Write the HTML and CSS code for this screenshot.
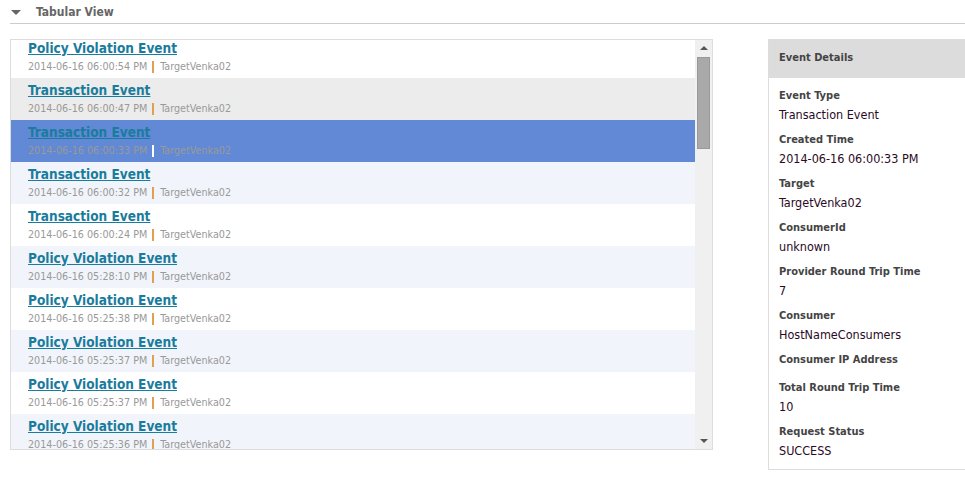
FILE: index.html
```html
<!DOCTYPE html>
<html lang="en">
<head>
  <meta charset="UTF-8">
  <title>Tabular View</title>
  <link rel="stylesheet" href="styles.css">
</head>
<body>
  <div class="section-head">
    <span class="caret"></span>
    <span class="section-title">Tabular View</span>
  </div>

  <div class="main">
    <div class="list-box">
      <div class="list-view">
        <div class="list-rows" id="event-rows"></div>
      </div>
      <div class="scrollbar">
        <span class="arrow up"></span>
        <div class="thumb"></div>
        <span class="arrow down"></span>
      </div>
    </div>

    <div class="details">
      <div class="details-head">Event Details</div>
      <div class="details-body" id="details-body"></div>
    </div>
  </div>

  <script>
    const events = [
      ['Policy Violation Event', '2014-06-16 06:00:54 PM', ''],
      ['Transaction Event', '2014-06-16 06:00:47 PM', 'hover'],
      ['Transaction Event', '2014-06-16 06:00:33 PM', 'selected'],
      ['Transaction Event', '2014-06-16 06:00:32 PM', 'alt'],
      ['Transaction Event', '2014-06-16 06:00:24 PM', ''],
      ['Policy Violation Event', '2014-06-16 05:28:10 PM', 'alt'],
      ['Policy Violation Event', '2014-06-16 05:25:38 PM', ''],
      ['Policy Violation Event', '2014-06-16 05:25:37 PM', 'alt'],
      ['Policy Violation Event', '2014-06-16 05:25:37 PM', ''],
      ['Policy Violation Event', '2014-06-16 05:25:36 PM', 'alt']
    ];

    const details = [
      ['Event Type', 'Transaction Event'],
      ['Created Time', '2014-06-16 06:00:33 PM'],
      ['Target', 'TargetVenka02'],
      ['ConsumerId', 'unknown'],
      ['Provider Round Trip Time', '7'],
      ['Consumer', 'HostNameConsumers'],
      ['Consumer IP Address', ''],
      ['Total Round Trip Time', '10'],
      ['Request Status', 'SUCCESS']
    ];

    const rows = document.getElementById('event-rows');
    events.forEach(ev => {
      const row = document.createElement('div');
      row.className = 'event-row ' + ev[2];
      row.innerHTML =
        '<a href="#" class="event-name">' + ev[0] + '</a>' +
        '<div class="event-meta">' + ev[1] +
        '<span class="sep"></span>TargetVenka02</div>';
      rows.appendChild(row);
    });

    const body = document.getElementById('details-body');
    details.forEach(d => {
      const label = document.createElement('div');
      label.className = 'detail-label';
      label.textContent = d[0];
      const value = document.createElement('div');
      value.className = 'detail-value';
      value.textContent = d[1];
      body.appendChild(label);
      body.appendChild(value);
    });
  </script>
</body>
</html>
```

FILE: styles.css
```css
body {
  margin: 0;
  background: #fff;
  font-family: "DejaVu Sans Condensed", "DejaVu Sans", sans-serif;
  color: #333;
}

.section-head {
  margin-left: 10px;
  height: 24px;
  border-bottom: 1px solid #ccc;
  display: flex;
  align-items: center;
  padding-top: 1px;
  box-sizing: border-box;
}

.caret {
  width: 0;
  height: 0;
  margin-left: 1px;
  border-left: 5px solid transparent;
  border-right: 5px solid transparent;
  border-top: 5px solid #666;
}

.section-title {
  margin-left: 15px;
  font-size: 12px;
  font-weight: bold;
  color: #666;
}

.main {
  display: flex;
  align-items: flex-start;
  margin-top: 15px;
  padding-left: 10px;
}

.list-box {
  flex: none;
  width: 701px;
  height: 409px;
  border: 1px solid #ddd;
  display: flex;
}

.list-view {
  flex: 1;
  overflow: hidden;
}

.list-rows {
  margin-top: -4px;
}

.event-row {
  height: 42px;
  padding-left: 17px;
  box-sizing: border-box;
  padding-top: 2px;
}

.event-row.hover {
  background: #ececec;
}

.event-row.selected {
  background: #6189d5;
}

.event-row.alt {
  background: #f1f5fb;
}

.event-name {
  display: block;
  width: max-content;
  font-size: 13.5px;
  line-height: 20px;
  font-weight: bold;
  color: #1a7c9c;
}

.event-meta {
  display: flex;
  align-items: center;
  padding-top: 1px;
  font-size: 10.7px;
  line-height: 16px;
  color: #999;
}

.sep {
  width: 2px;
  height: 12px;
  margin: 0 6px 0 5px;
  background: #e0a050;
}

.selected .sep {
  background: #fff;
}

.scrollbar {
  width: 17px;
  background: #f0f0f0;
  display: flex;
  flex-direction: column;
  align-items: center;
}

.arrow {
  width: 0;
  height: 0;
  border-left: 4px solid transparent;
  border-right: 4px solid transparent;
}

.arrow.up {
  margin-top: 6px;
  border-bottom: 4px solid #555;
}

.arrow.down {
  margin-top: auto;
  margin-bottom: 6px;
  border-top: 4px solid #555;
}

.thumb {
  width: 11px;
  height: 90px;
  margin-top: 7px;
  background: #a9a9a9;
  border: 1px solid #999;
}

.details {
  margin-left: 55px;
  flex: 1;
  min-width: 190px;
  border: 1px solid #ddd;
  border-right: none;
}

.details-head {
  height: 38px;
  line-height: 36px;
  padding-left: 10px;
  background: #dcdcdc;
  font-size: 11px;
  font-weight: bold;
  color: #444;
}

.details-body {
  padding: 8px 10px 3px;
}

.detail-label {
  font-size: 11px;
  line-height: 19px;
  font-weight: bold;
  color: #444;
}

.detail-value {
  font-size: 12.5px;
  line-height: 18px;
  padding-top: 1px;
  margin-bottom: 6px;
  color: #2a0a26;
}

.detail-value:empty {
  padding-top: 3px;
}
```
